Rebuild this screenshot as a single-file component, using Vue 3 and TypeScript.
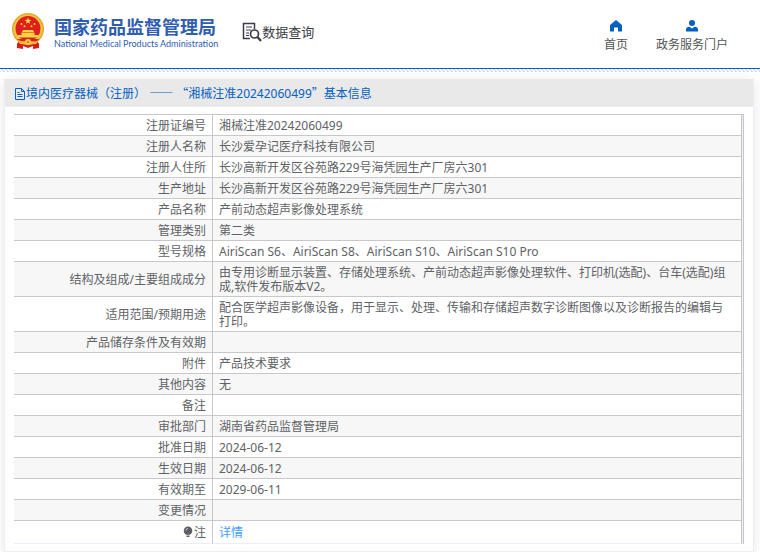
<script setup lang="ts">
interface Row {
  label: string
  value: string
}

const rows: Row[] = [
  { label: '注册证编号', value: '湘械注准20242060499' },
  { label: '注册人名称', value: '长沙爱孕记医疗科技有限公司' },
  { label: '注册人住所', value: '长沙高新开发区谷苑路229号海凭园生产厂房六301' },
  { label: '生产地址', value: '长沙高新开发区谷苑路229号海凭园生产厂房六301' },
  { label: '产品名称', value: '产前动态超声影像处理系统' },
  { label: '管理类别', value: '第二类' },
  { label: '型号规格', value: 'AiriScan S6、AiriScan S8、AiriScan S10、AiriScan S10 Pro' },
  { label: '结构及组成/主要组成成分', value: '由专用诊断显示装置、存储处理系统、产前动态超声影像处理软件、打印机(选配)、台车(选配)组成,软件发布版本V2。' },
  { label: '适用范围/预期用途', value: '配合医学超声影像设备，用于显示、处理、传输和存储超声数字诊断图像以及诊断报告的编辑与打印。' },
  { label: '产品储存条件及有效期', value: '' },
  { label: '附件', value: '产品技术要求' },
  { label: '其他内容', value: '无' },
  { label: '备注', value: '' },
  { label: '审批部门', value: '湖南省药品监督管理局' },
  { label: '批准日期', value: '2024-06-12' },
  { label: '生效日期', value: '2024-06-12' },
  { label: '有效期至', value: '2029-06-11' },
  { label: '变更情况', value: '' },
]
</script>

<template>
  <header class="top">
    <a class="brand" href="#">
      <svg class="emblem" viewBox="0 0 32 36" aria-hidden="true">
        <path d="M7 26 L5 34 L11 33 L16 35 L21 33 L27 34 L25 26Z" fill="#d8201c" />
        <circle cx="16" cy="16" r="16" fill="#e3a92a" />
        <circle cx="16" cy="16" r="14.5" fill="#f2c744" />
        <circle cx="16" cy="15.500" r="12.500" fill="#df1f1c" />
        <path d="M16 4.500l.9 2.300 2.500.1-2 1.500.7 2.400-2.100-1.400-2.100 1.400.7-2.400-2-1.500 2.500-.1z" fill="#f8d447" />
        <g fill="#f8d447">
          <circle cx="9.500" cy="11" r="1" />
          <circle cx="22.500" cy="11" r="1" />
          <circle cx="12.500" cy="13.300" r="1" />
          <circle cx="19.500" cy="13.300" r="1" />
          <path d="M11 17h10l1 2H10z" />
          <path d="M9.500 19.500h13V22H26v2.500H6V22h3.500z" />
        </g>
        <path d="M5 26h22l-3 4H8z" fill="#df1f1c" />
        <path d="M5 26q5 4 11 1q6 3 11 0l-3 4q-4 1-6-1l-2-1-2 1q-2 2-6 1z" fill="#eebc38" />
        <circle cx="16" cy="29" r="3" fill="#f6ce48" />
        <circle cx="16" cy="29" r="1.200" fill="#c98d20" />
        <path d="M5 30l6 2v4l-6-1zM27 30l-6 2v4l6-1z" fill="#d81c1a" />
      </svg>
      <span class="brand-text">
        <span class="brand-cn">国家药品监督管理局</span>
        <span class="brand-en" lang="en">National Medical Products Administration</span>
      </span>
    </a>
    <a class="search" href="#">
      <svg class="search-icon" viewBox="0 0 20 20" fill="none" stroke="#3b3b4b" aria-hidden="true">
        <path d="M12.500 7V1.500H1.500v15H8" stroke-width="1.500" />
        <path d="M4 5h6M4 8h5M4 11h3M4 13.500h3" stroke-width="1.200" />
        <circle cx="12.500" cy="12" r="4" stroke-width="1.700" />
        <path d="M15.500 15l3.500 4" stroke-width="2.200" />
      </svg>
      <span>数据查询</span>
    </a>
    <nav class="nav">
      <a href="#">
        <svg viewBox="0 0 12 12" aria-hidden="true">
          <path d="M6 0L0 5v6.500h4V7.500h4v4h4V5z" fill="#0560c2" />
        </svg>
        <span>首页</span>
      </a>
      <a href="#">
        <svg viewBox="0 0 12 12" aria-hidden="true">
          <circle cx="6" cy="3" r="3" fill="#0560c2" />
          <path d="M0 11.500V9.500q0-2.500 3.500-2.800L6 8.500l2.500-1.800Q12 7 12 9.500v2z" fill="#0560c2" />
        </svg>
        <span>政务服务门户</span>
      </a>
    </nav>
  </header>
  <div class="hatch"></div>
  <main class="card">
    <h1 class="title">
      <svg viewBox="0 0 10 12" fill="none" stroke="#0560c2" aria-hidden="true">
        <path d="M.5 .5h6l3 3v8h-9zM6.500 .5v3h3M2.500 4.500h2M2.500 6.500h5M2.500 8.500h5" />
      </svg>
      <span>境内医疗器械（注册） <span class="wide" lang="zh-CN">——</span> <span class="wide" lang="zh-CN">“</span>湘械注准20242060499<span class="wide" lang="zh-CN">”</span>基本信息</span>
    </h1>
    <div class="body">
      <table class="info">
        <tbody>
          <tr v-for="row in rows" :key="row.label">
            <th scope="row">{{ row.label }}</th>
            <td>{{ row.value }}</td>
          </tr>
          <tr class="note">
            <th scope="row">
              <svg class="bulb" viewBox="0 0 10 12" aria-hidden="true">
                <path d="M5 0.500a4.300 4.300 0 0 1 4.300 4.300c0 2-1.300 3-2.300 4H3c-1-1-2.300-2-2.300-4A4.300 4.300 0 0 1 5 .5zM3.500 9.500h3v1.500h-3z" fill="#5c5e63" />
                <path d="M3 4.500a2 2 0 0 1 2-2" fill="none" stroke="#c9c9cc" />
              </svg>注
            </th>
            <td><a href="#">详情</a></td>
          </tr>
        </tbody>
      </table>
    </div>
  </main>
</template>

<style>
body {
  margin: 0;
  background: #fff;
  font-family: "Noto Sans", "Noto Sans CJK SC", sans-serif;
  font-size: 12px;
  color: #606266;
}
</style>

<style scoped>
a {
  color: inherit;
  text-decoration: none;
}
.top {
  display: flex;
  align-items: center;
  height: 68px;
  padding: 0 32px 0 12px;
  box-sizing: border-box;
}
.brand {
  display: flex;
  align-items: center;
  gap: 10px;
  color: #2f5db0;
  padding-bottom: 6px;
}
.emblem {
  width: 32px;
  height: 36px;
}
.brand-text {
  display: flex;
  flex-direction: column;
  gap: 1px;
  padding-top: 3px;
}
.brand-cn {
  font-family: "Noto Sans CJK SC", sans-serif;
  font-size: 18px;
  font-weight: 700;
  line-height: 22px;
}
.brand-en {
  font-family: Lato, sans-serif;
  font-size: 9px;
  font-weight: 400;
  line-height: 12px;
}
.search {
  display: flex;
  align-items: center;
  margin-left: 24px;
  padding-bottom: 4px;
  font-size: 13px;
  line-height: 20px;
  color: #3b3b43;
}
.search-icon {
  width: 20px;
  height: 20px;
}
.nav {
  display: flex;
  gap: 28px;
  margin-left: auto;
  padding-top: 6px;
}
.nav a {
  display: flex;
  flex-direction: column;
  align-items: center;
  gap: 4px;
  line-height: 18px;
  color: #555;
}
.nav svg {
  width: 12px;
  height: 12px;
}
.hatch {
  height: 3px;
  border-top: 1px solid #0560c2;
  background: linear-gradient(45deg, #ddd 25%, #fff 25% 50%, #ddd 50% 75%, #fff 75%) 0 0 / 4px 4px;
}
.card {
  margin: 7px 6px 0 4px;
  border: 1px solid #ebeef5;
  border-top: 0;
  background: #fff;
  box-shadow: 0 2px 12px rgba(0, 0, 0, 0.1);
}
.title {
  display: flex;
  align-items: center;
  height: 25px;
  margin: 0;
  padding: 2px 10px 0;
  border-bottom: 1px solid #ebeef5;
  background: #e9e9e9;
  color: #0560c2;
  font-size: 12px;
  font-weight: 400;
  line-height: 18px;
}
.title svg {
  width: 10px;
  height: 12px;
  margin-right: 1px;
}
.title span {
  white-space: pre;
}
.title .wide {
  font-family: "Noto Sans CJK SC", sans-serif;
}
.body {
  padding: 7px 9px;
}
.info {
  width: 100%;
  border-collapse: separate;
  border-spacing: 0;
  border-right: 1px solid #c8c8ce;
  border-top: 1px solid #c8c8ca;
  padding-right: 1px;
  background: #ebeef5;
}
.info th,
.info td {
  height: 14px;
  padding: 4px 8px 2px 6px;
  border-bottom: 1px solid #c8c8ca;
  border-right: 1px solid #c8c8ca;
  background: #fff;
  font-weight: 400;
  line-height: 14px;
  text-align: left;
}
.info th {
  width: 186px;
  padding-right: 6px;
  text-align: right;
}
.info tr:nth-child(even) > * {
  background: #f7f7f7;
}
.info .note > * {
  height: 16px;
  border-bottom-color: #ebeef5;
}
.note a {
  color: #409eff;
}
.bulb {
  width: 10px;
  height: 12px;
  margin-right: 1px;
  vertical-align: -1px;
}
</style>
